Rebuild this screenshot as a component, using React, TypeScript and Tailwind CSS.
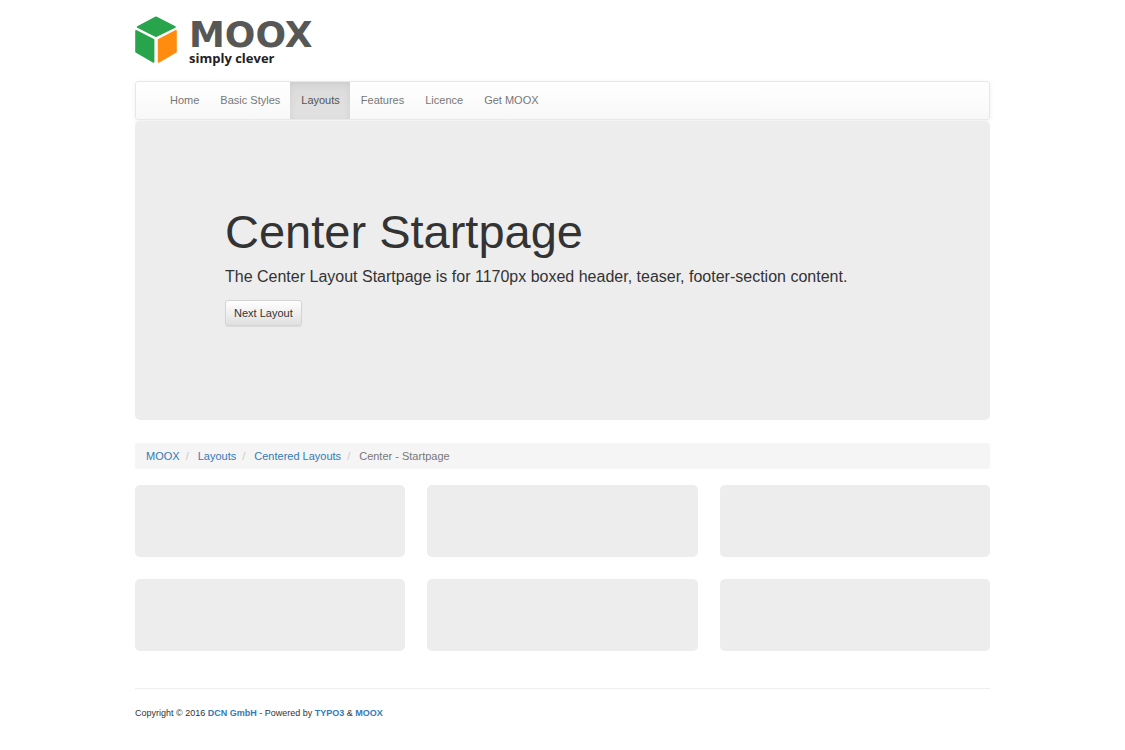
const navItems = ['Home', 'Basic Styles', 'Layouts', 'Features', 'Licence', 'Get MOOX'];
const crumbs = ['MOOX', 'Layouts', 'Centered Layouts'];
const tiles = [1, 2, 3, 4, 5, 6];

function Logo() {
  return (
    <a href="#" className="flex h-12 w-fit items-start gap-3" aria-label="MOOX simply clever">
      <svg width="42" height="48" viewBox="0 0 42 48" aria-hidden="true">
        <g strokeWidth="1.6" strokeLinejoin="round">
          <path d="M21 1.3 L40 11 L21 20.2 L2.6 11 Z" fill="#28a54c" stroke="#28a54c" />
          <path d="M1 14.8 L18.6 23.6 V46 L1 35.8 Z" fill="#28a54c" stroke="#28a54c" />
          <path d="M41 14.8 L23.6 23.6 V46 L41 35.8 Z" fill="#ff8c0f" stroke="#ff8c0f" />
        </g>
      </svg>
      <span className="flex flex-col pt-1">
        <span className="font-['DejaVu_Sans',sans-serif] text-[36px] leading-[30px] font-bold text-[#575756]">MOOX</span>
        <span className="font-['Open_Sans',sans-serif] text-[13px] leading-4 font-bold text-[#222222]">simply clever</span>
      </span>
    </a>
  );
}

export default function App() {
  return (
    <div className="bg-white font-['Liberation_Sans',Arial,sans-serif] text-[11px] leading-4 text-[#333333]">
      <div className="mx-auto w-[76%] min-w-[320px]">
        <header className="pt-4">
          <Logo />
          <nav
            aria-label="Main"
            className="mt-[17px] rounded-[3px] border border-[#e8e8e8] bg-linear-to-b from-white to-[#f8f8f8] pl-[23px] shadow-[0_1px_4px_rgba(0,0,0,0.075)]"
          >
            <ul className="flex flex-wrap">
              {navItems.map((item) => (
                <li key={item}>
                  <a
                    href="#"
                    aria-current={item === 'Layouts' ? 'page' : undefined}
                    className={
                      item === 'Layouts'
                        ? 'block bg-linear-to-b from-[#dbdbdb] to-[#e2e2e2] pt-[10px] pr-[10px] pb-[11px] pl-[11px] text-[#555555] shadow-[inset_0_2px_7px_rgba(0,0,0,0.075)]'
                        : 'block pt-[10px] pr-[10px] pb-[11px] pl-[11px] text-[#777777]'
                    }
                  >
                    {item}
                  </a>
                </li>
              ))}
            </ul>
          </nav>
        </header>

        <main>
          <section className="mt-px rounded-[5px] bg-[#ededed] px-[90px] pt-[85px] pb-[94px]">
            <h1 className="text-[47px] leading-[52px]">Center Startpage</h1>
            <p className="mt-2 text-[16px] leading-[22px]">
              The Center Layout Startpage is for 1170px boxed header, teaser, footer-section content.
            </p>
            <button
              type="button"
              className="mt-3 block rounded-[3px] border border-[#d4d4d4] bg-linear-to-b from-white to-[#e0e0e0] px-2 py-1 shadow-[0_1px_1px_rgba(0,0,0,0.075)]"
            >
              Next Layout
            </button>
          </section>

          <nav aria-label="Breadcrumb" className="mt-[23px] rounded-[3px] bg-[#f5f5f5] px-[11px] py-[5px]">
            <ol className="flex flex-wrap">
              {crumbs.map((crumb) => (
                <li key={crumb} className="flex">
                  <a href="#" className="text-[#337ab7]">{crumb}</a>
                  <span aria-hidden="true" className="pr-[9px] pl-[6px] text-[#cccccc]">/</span>
                </li>
              ))}
              <li aria-current="page" className="text-[#777777]">Center - Startpage</li>
            </ol>
          </nav>

          <div className="mt-4 grid grid-cols-3 gap-[22px]">
            {tiles.map((tile) => (
              <div key={tile} className="h-[72px] rounded-[5px] bg-[#ededed]" />
            ))}
          </div>
        </main>

        <footer className="mt-[37px] border-t border-[#eeeeee] pt-4 pb-6 text-[9px]">
          <p>
            Copyright © 2016 <a href="#" className="font-bold text-[#337ab7]">DCN GmbH</a> - Powered by{' '}
            <a href="#" className="font-bold text-[#337ab7]">TYPO3</a> &amp;{' '}
            <a href="#" className="font-bold text-[#337ab7]">MOOX</a>
          </p>
        </footer>
      </div>
    </div>
  );
}
